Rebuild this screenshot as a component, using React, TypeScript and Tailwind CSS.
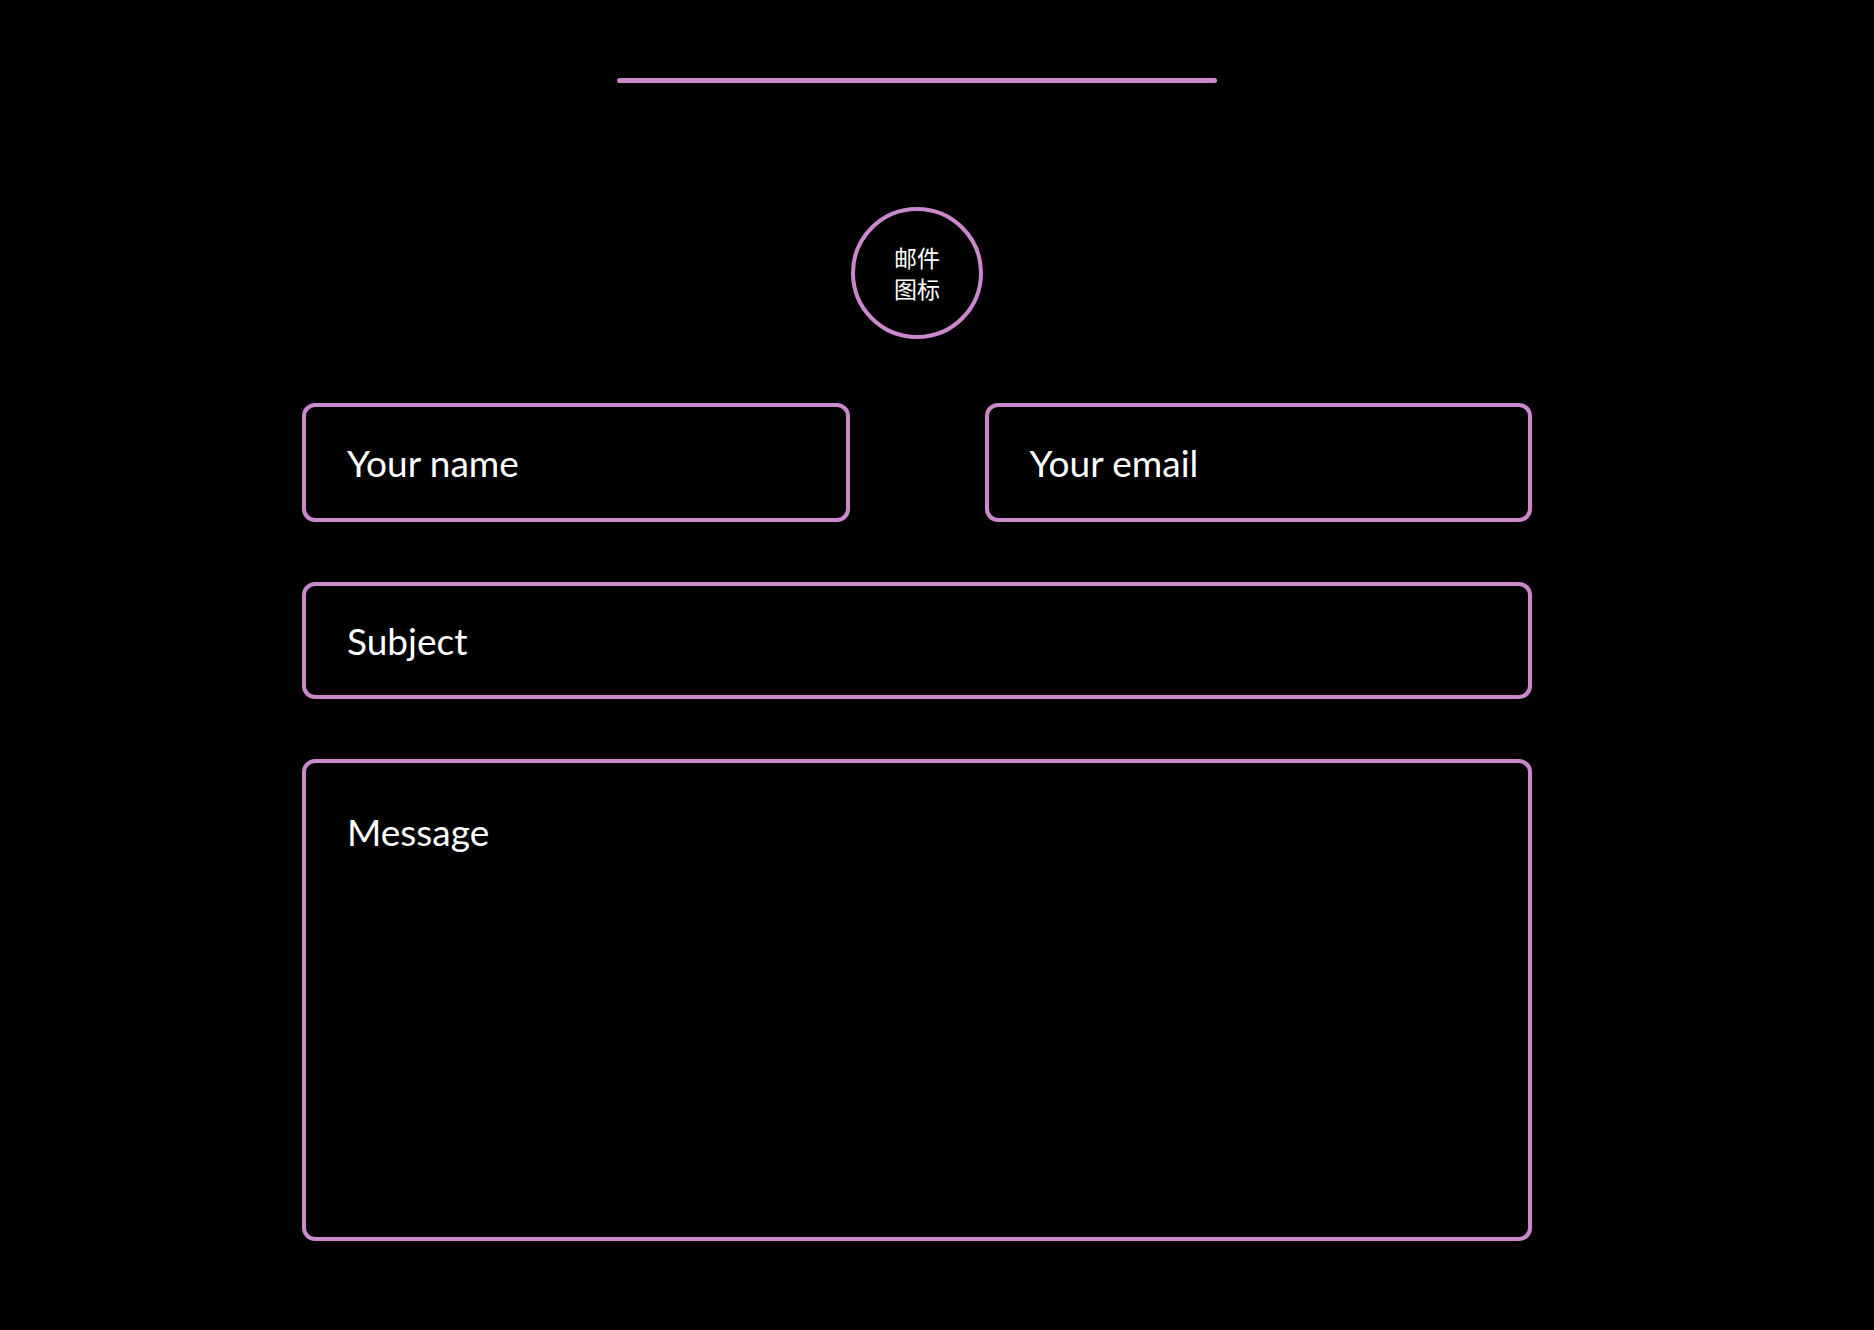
import React from "react";

const fieldClass =
  "w-full rounded-[13px] border-[4px] border-[#cc88cc] bg-black px-[41px] text-[37px] text-white placeholder:text-white outline-none font-['Lato',sans-serif]";

export default function App() {
  return (
    <div className="min-h-[1330px] w-full bg-black font-['Lato',sans-serif]">
      <div className="flex w-full justify-center pr-[40px]">
        <div className="flex w-[1230px] flex-col items-center">
          {/* Top divider */}
          <div className="mt-[78px] h-[5px] w-[600px] rounded-full bg-[#cc88cc]" />

          {/* Mail icon placeholder */}
          <div className="mt-[124px] flex h-[132px] w-[132px] flex-col items-center justify-center rounded-full border-[4px] border-[#cc88cc] text-[23px] text-white font-['Noto_Sans_CJK_SC',sans-serif]">
            <div className="h-[31px] leading-[31px]">邮件</div>
            <div className="h-[31px] leading-[31px]">图标</div>
          </div>

          <form className="mt-[64px] flex w-full flex-col gap-[60px]">
            <div className="grid grid-cols-2 gap-[135px]">
              <input type="text" placeholder="Your name" className={`${fieldClass} h-[119px]`} />
              <input type="email" placeholder="Your email" className={`${fieldClass} h-[119px]`} />
            </div>
            <input type="text" placeholder="Subject" className={`${fieldClass} h-[117px]`} />
            <textarea
              placeholder="Message"
              className={`${fieldClass} h-[482px] resize-none pt-[41px]`}
            />
          </form>
        </div>
      </div>
    </div>
  );
}
